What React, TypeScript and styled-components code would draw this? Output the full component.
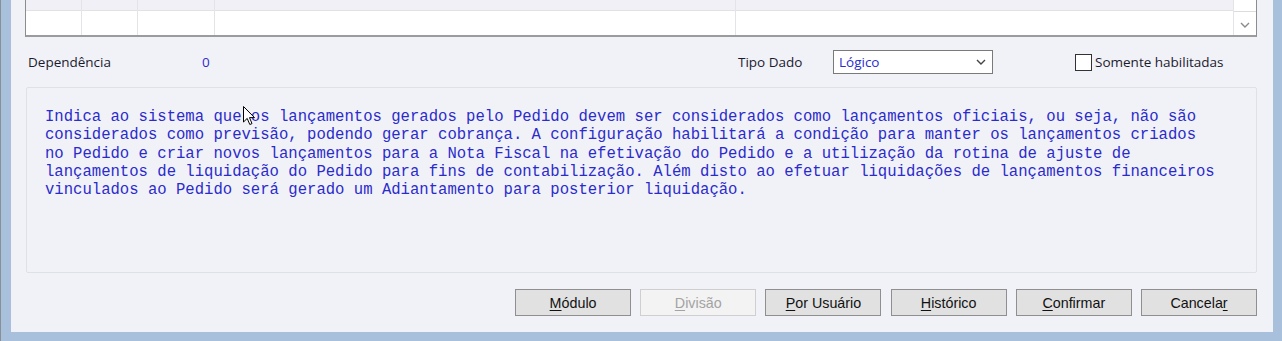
import styled, { createGlobalStyle } from "styled-components";

const Global = createGlobalStyle`
	html, body {
		margin: 0;
		padding: 0;
		background: #a8c0dc;
	}
	* {
		box-sizing: border-box;
	}
`;

const Frame = styled.div`
	width: 1282px;
	height: 341px;
	border-left: 1px solid #8a8f96;
	padding: 0 9px 9px 10px;
	background: #a8c0dc;
`;

const Content = styled.div`
	height: 332px;
	background: #f1f2f8;
	display: flex;
	flex-direction: column;
	font-family: "Open Sans", "Noto Sans", sans-serif;
	font-size: 13.5px;
	color: #1b1b2e;
`;

const GridBox = styled.div`
	margin: 0 16px 0 14px;
	height: 37px;
	border-left: 1px solid #8d8d8d;
	border-right: 1px solid #8d8d8d;
	border-bottom: 2px solid #9b9b9b;
	display: flex;
	background: #fff;
`;

const GridCol = styled.div<{ $w?: number }>`
	${(p) => (p.$w ? `width: ${p.$w}px;` : "flex: 1;")}
	display: flex;
	flex-direction: column;
	border-right: 1px solid #e4e4e8;
`;

const HeadCell = styled.div`
	height: 11px;
	background: #f0f0f6;
	border-bottom: 1px solid #e2e2e6;
`;

const Scroll = styled.div`
	width: 22px;
	display: flex;
	flex-direction: column;
`;

const ScrollTrack = styled.div`
	height: 12px;
	border-bottom: 1px solid #dcdcdc;
`;

const ScrollBtn = styled.div`
	flex: 1;
	display: flex;
	align-items: center;
	justify-content: center;
	padding-top: 2px;
`;

const FormRow = styled.div`
	margin: 13px 0 0 17px;
	height: 24px;
	display: grid;
	grid-template-columns: 174px 536px 95px 160px 82px auto;
	align-items: center;
`;

const Label = styled.span`
	white-space: nowrap;
`;

const Value = styled.span`
	color: #2c2ccc;
`;

const Select = styled.div`
	height: 24px;
	background: #fff;
	border: 1px solid #7a7a7a;
	display: flex;
	align-items: center;
	justify-content: space-between;
	padding: 0 6px 0 5px;
	color: #2c2ccc;
`;

const Check = styled.label`
	display: flex;
	align-items: center;
	gap: 3px;
	white-space: nowrap;
`;

const Box = styled.span`
	width: 17px;
	height: 17px;
	background: #fff;
	border: 1px solid #333;
`;

const Panel = styled.div`
	position: relative;
	margin: 13px 16px 0 15px;
	height: 186px;
	border: 1px solid #dde2e8;
	border-radius: 2px;
	padding: 20px 10px 0 18px;
	font-family: "Liberation Mono", "Courier New", monospace;
	font-size: 15.6px;
	line-height: 18.3px;
	color: #2b2bcc;
	white-space: nowrap;
`;

const Cursor = styled.svg`
	position: absolute;
	left: 216px;
	top: 18px;
`;

const ButtonRow = styled.div`
	margin: 16px 16px 0 0;
	display: flex;
	justify-content: flex-end;
	gap: 9.2px;
`;

const Button = styled.button<{ $disabled?: boolean }>`
	width: 116px;
	height: 27px;
	padding: 0;
	font-family: "Liberation Sans", Arial, sans-serif;
	font-size: 14.3px;
	background: ${(p) => (p.$disabled ? "#f3f3f3" : "#e1e1e1")};
	border: 1px solid ${(p) => (p.$disabled ? "#cfcfcf" : "#8f8f8f")};
	color: ${(p) => (p.$disabled ? "#a3a3a3" : "#111")};
	u {
		text-underline-offset: 2px;
	}
`;

const lines = [
	"Indica ao sistema que os lançamentos gerados pelo Pedido devem ser considerados como lançamentos oficiais, ou seja, não são",
	"considerados como previsão, podendo gerar cobrança. A configuração habilitará a condição para manter os lançamentos criados",
	"no Pedido e criar novos lançamentos para a Nota Fiscal na efetivação do Pedido e a utilização da rotina de ajuste de",
	"lançamentos de liquidação do Pedido para fins de contabilização. Além disto ao efetuar liquidações de lançamentos financeiros",
	"vinculados ao Pedido será gerado um Adiantamento para posterior liquidação.",
];

const Chevron = ({ color = "#555" }: { color?: string }) => (
	<svg width="10" height="6" viewBox="0 0 10 6">
		<path d="M1 1 L5 5 L9 1" fill="none" stroke={color} strokeWidth="1.4" />
	</svg>
);

function App() {
	return (
		<>
			<Global />
			<Frame>
				<Content>
					<GridBox>
						<GridCol $w={56}><HeadCell /></GridCol>
						<GridCol $w={56}><HeadCell /></GridCol>
						<GridCol $w={77}><HeadCell /></GridCol>
						<GridCol $w={521}><HeadCell /></GridCol>
						<GridCol><HeadCell /></GridCol>
						<Scroll>
							<ScrollTrack />
							<ScrollBtn>
								<Chevron color="#8a8a8a" />
							</ScrollBtn>
						</Scroll>
					</GridBox>
					<FormRow>
						<Label>Dependência</Label>
						<Value>0</Value>
						<Label>Tipo Dado</Label>
						<Select>
							<span>Lógico</span>
							<Chevron color="#444" />
						</Select>
						<span />
						<Check>
							<Box />
							Somente habilitadas
						</Check>
					</FormRow>
					<Panel>
						{lines.map((l) => (
							<div key={l}>{l}</div>
						))}
						<Cursor width="13" height="20" viewBox="0 0 13 20">
							<path
								d="M0.5 0.5 L0.5 16 L4.2 12.4 L6.8 18.5 L9 17.6 L6.5 11.6 L11.5 11.6 Z"
								fill="#fff"
								stroke="#000"
								strokeWidth="1"
							/>
						</Cursor>
					</Panel>
					<ButtonRow>
						<Button><u>M</u>ódulo</Button>
						<Button $disabled><u>D</u>ivisão</Button>
						<Button><u>P</u>or Usuário</Button>
						<Button><u>H</u>istórico</Button>
						<Button><u>C</u>onfirmar</Button>
						<Button>Cancela<u>r</u></Button>
					</ButtonRow>
				</Content>
			</Frame>
		</>
	);
}

export default App;
